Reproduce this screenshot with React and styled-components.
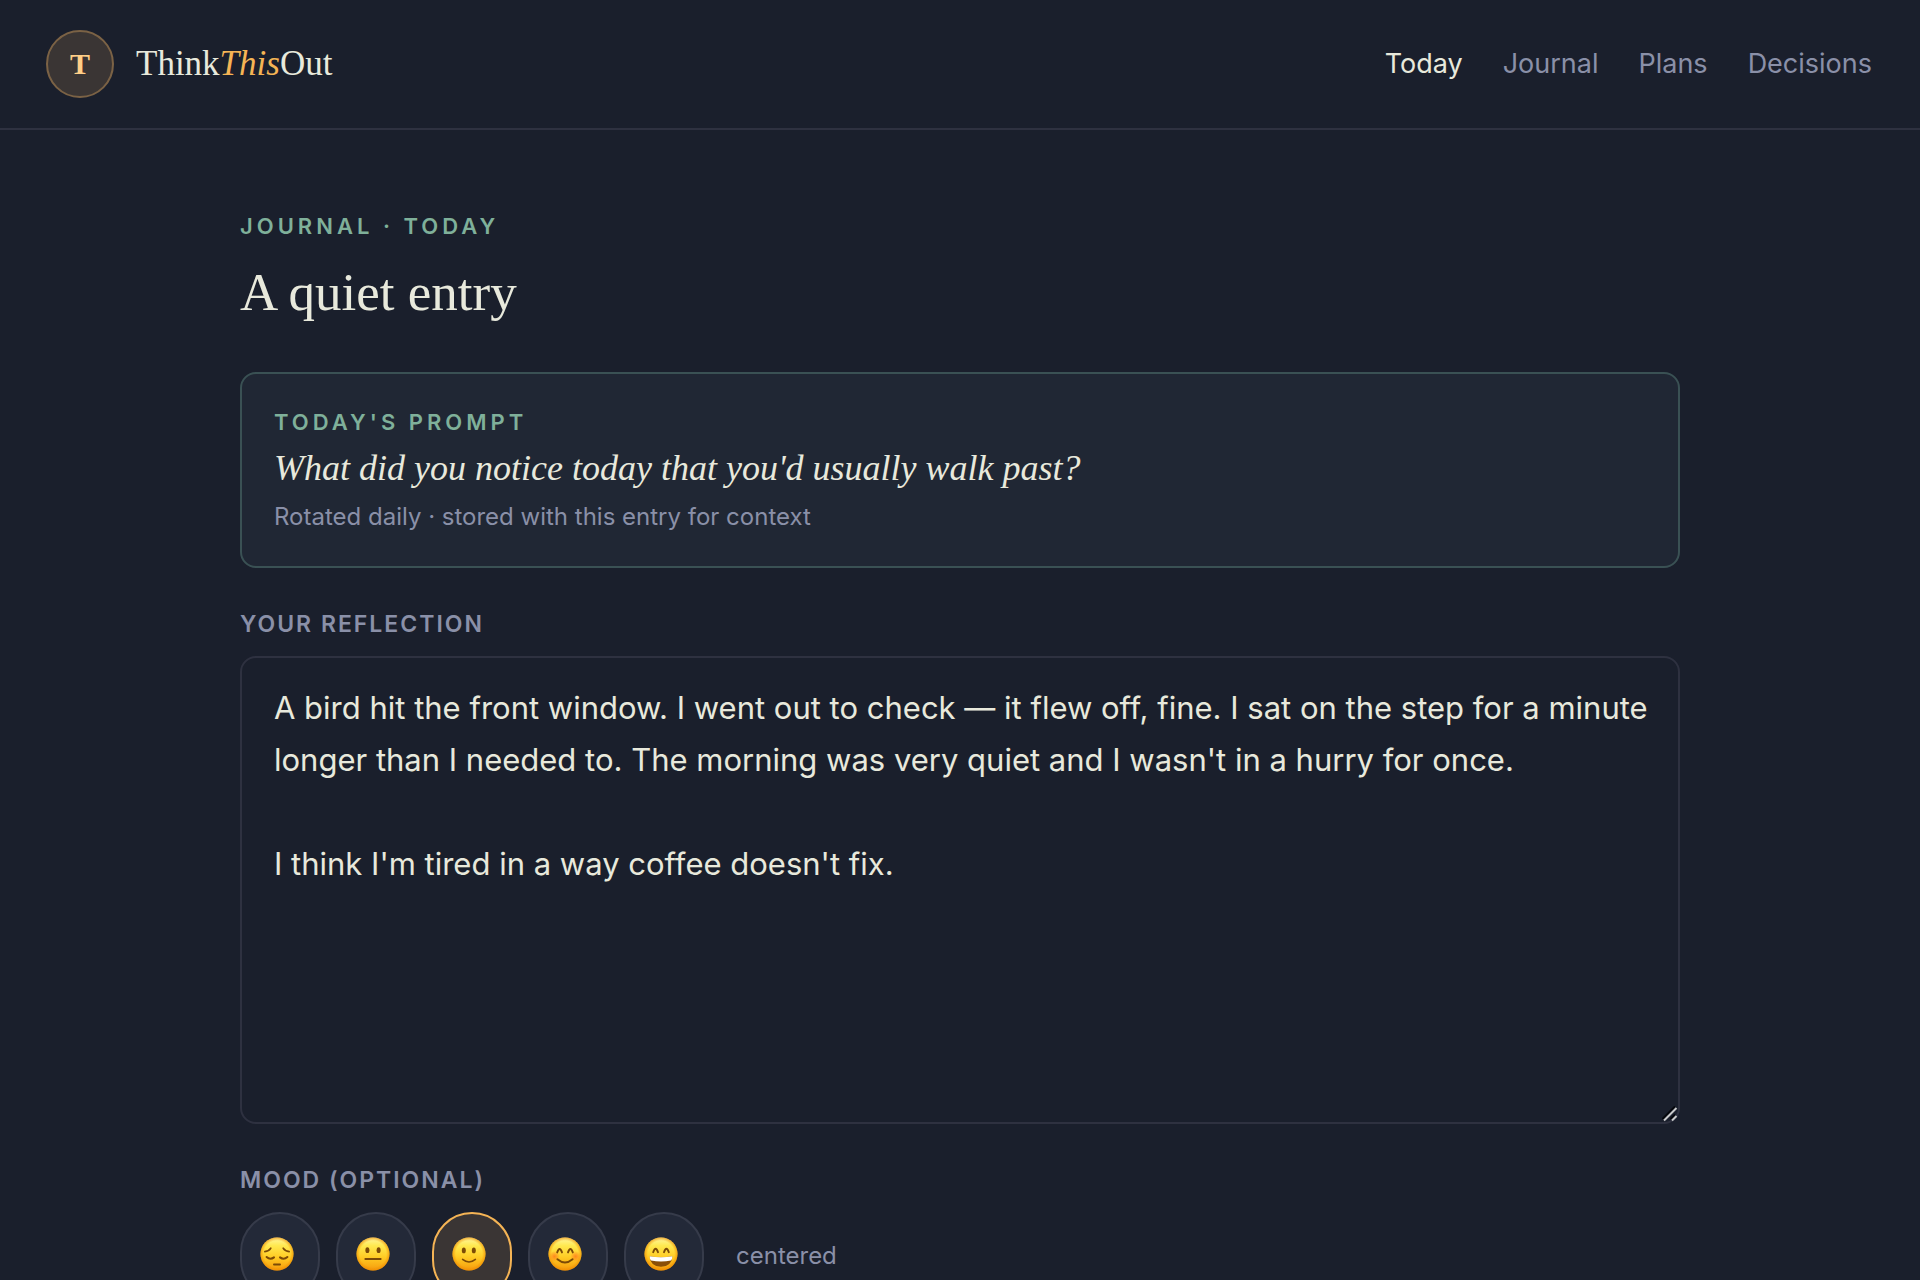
import { useState } from "react";
import styled, { createGlobalStyle } from "styled-components";

const GlobalStyle = createGlobalStyle`
    * {
        box-sizing: border-box;
    }
    html {
        scrollbar-width: none;
    }
    body {
        margin: 0;
        background-color: #1a1f2c;
        color: #e8e9dc;
        font-family: 'Inter', 'Liberation Sans', sans-serif;
    }
`

const links = ["Today", "Journal", "Plans", "Decisions"];

const moods = [
    { id: "low", label: "low", face: Pensive },
    { id: "flat", label: "flat", face: Neutral },
    { id: "centered", label: "centered", face: Slight },
    { id: "warm", label: "warm", face: Blush },
    { id: "bright", label: "bright", face: Grin },
];

const entry = `A bird hit the front window. I went out to check — it flew off, fine. I sat on the step for a minute longer than I needed to. The morning was very quiet and I wasn't in a hurry for once.

I think I'm tired in a way coffee doesn't fix.`;

function Face({ id, children }) {
    return (
        <svg width="34" height="34" viewBox="0 0 34 34" fill="none" strokeLinecap="round" aria-hidden="true">
            <defs>
                <linearGradient id={`${id}-skin`} x1="0" y1="0" x2="0" y2="1">
                    <stop offset="0" stopColor="#fff6a0" />
                    <stop offset="0.25" stopColor="#ffe94f" />
                    <stop offset="0.6" stopColor="#ffcb24" />
                    <stop offset="1" stopColor="#f59a0c" />
                </linearGradient>
                <radialGradient id={`${id}-rim`}>
                    <stop offset="0.8" stopColor="#ee8a00" stopOpacity="0" />
                    <stop offset="1" stopColor="#ee8a00" stopOpacity="0.65" />
                </radialGradient>
                <radialGradient id={`${id}-cheek`}>
                    <stop offset="0" stopColor="#ff6a1c" stopOpacity="0.7" />
                    <stop offset="1" stopColor="#ff6a1c" stopOpacity="0" />
                </radialGradient>
            </defs>
            <circle cx="17" cy="17" r="16.5" fill={`url(#${id}-skin)`} />
            <circle cx="17" cy="17" r="16.5" fill={`url(#${id}-rim)`} />
            {children}
        </svg>
    )
}

function Pensive() {
    return (
        <Face id="pensive">
            <g stroke="#7b4a06" strokeWidth="1.6">
                <path d="M4.8 14.6Q9 14 10.8 11.2" />
                <path d="M29.2 14.6Q25 14 23.2 11.2" />
                <path d="M6.6 20Q10.2 23.4 14 20.4" strokeWidth="2" />
                <path d="M27.4 20Q23.8 23.4 20 20.4" strokeWidth="2" />
                <path d="M14 27.4H20" strokeWidth="2" />
            </g>
        </Face>
    )
}

function Neutral() {
    return (
        <Face id="neutral">
            <ellipse cx="11.4" cy="13.2" rx="2" ry="2.9" fill="#7b4a06" />
            <ellipse cx="22.6" cy="13.2" rx="2" ry="2.9" fill="#7b4a06" />
            <path d="M9.4 22H24.6" stroke="#7b4a06" strokeWidth="2" />
        </Face>
    )
}

function Slight() {
    return (
        <Face id="slight">
            <ellipse cx="11.8" cy="13.4" rx="2" ry="2.9" fill="#7b4a06" />
            <ellipse cx="21.8" cy="13.4" rx="2" ry="2.9" fill="#7b4a06" />
            <path d="M10.6 22.4Q17 27.6 23.4 22.4" stroke="#7b4a06" strokeWidth="1.6" />
        </Face>
    )
}

function Blush() {
    return (
        <Face id="blush">
            <circle cx="6.4" cy="19.4" r="5.4" fill="url(#blush-cheek)" />
            <circle cx="27.6" cy="19.4" r="5.4" fill="url(#blush-cheek)" />
            <g stroke="#7b4a06" strokeWidth="1.9">
                <path d="M9.2 15.4Q11.6 8.6 14 15.4" />
                <path d="M20 15.4Q22.4 8.6 24.8 15.4" />
                <path d="M9.4 22.2Q17 28.6 24.6 22.2" />
            </g>
        </Face>
    )
}

function Grin() {
    return (
        <Face id="grin">
            <g stroke="#7b4a06" strokeWidth="1.9">
                <path d="M9.2 15.2Q11.6 8.4 14 15.2" />
                <path d="M20 15.2Q22.4 8.4 24.8 15.2" />
            </g>
            <path d="M5.6 19.2Q17 21.4 28.4 19.2Q27.6 29.6 17 29.8Q6.4 29.6 5.6 19.2Z" fill="#8a4f08" />
            <path d="M5.6 19.2Q17 21.4 28.4 19.2Q28.3 22 27 23.4Q17 25.4 7 23.4Q5.7 22 5.6 19.2Z" fill="#fff" />
        </Face>
    )
}

function Header() {
    return (
        <TopBar>
            <Brand href="#">
                <Badge>T</Badge>
                <BrandName>Think<em>This</em>Out</BrandName>
            </Brand>
            <Nav>
                {links.map(link => (
                    <NavLink key={link} href="#" $active={link === "Today"}>{link}</NavLink>
                ))}
            </Nav>
        </TopBar>
    )
}

function App() {
    const [text, setText] = useState(entry);
    const [mood, setMood] = useState("centered");

    return (
        <>
            <GlobalStyle />
            <Header />
            <Main>
                <Eyebrow>Journal · Today</Eyebrow>
                <Title>A quiet entry</Title>
                <PromptCard>
                    <Eyebrow>Today's prompt</Eyebrow>
                    <Prompt>What did you notice today that you'd usually walk past?</Prompt>
                    <Note>Rotated daily · stored with this entry for context</Note>
                </PromptCard>
                <Label as="label" htmlFor="reflection">Your reflection</Label>
                <Field>
                    <TextArea
                        id="reflection"
                        rows={8}
                        spellCheck={false}
                        value={text}
                        onChange={e => setText(e.target.value)}
                    />
                    <Grip width="16" height="16" viewBox="0 0 16 16" fill="none" aria-hidden="true">
                        <path d="M0.5 13L13 0.5M8.5 13L13 8.5" stroke="#05070c" strokeWidth="2" />
                        <path d="M2 14.5L14.5 2M10 14.5L14.5 10" stroke="#c9cacb" strokeWidth="2" />
                    </Grip>
                </Field>
                <Label id="mood-label">Mood (optional)</Label>
                <Moods role="group" aria-labelledby="mood-label">
                    {moods.map(({ id, label, face: Icon }) => (
                        <MoodButton
                            key={id}
                            type="button"
                            aria-label={label}
                            aria-pressed={mood === id}
                            $selected={mood === id}
                            onClick={() => setMood(id)}
                        >
                            <Icon />
                        </MoodButton>
                    ))}
                    <MoodName>{moods.find(m => m.id === mood).label}</MoodName>
                </Moods>
            </Main>
        </>
    )
}

const TopBar = styled.header`
    display: flex;
    align-items: center;
    justify-content: space-between;
    padding: 30px 48px 30px 46px;
    border-bottom: 2px solid #2e3140;
`

const Brand = styled.a`
    display: flex;
    align-items: center;
    gap: 22px;
    color: inherit;
    text-decoration: none;
    font-family: 'Liberation Serif', serif;
`

const Badge = styled.span`
    display: flex;
    align-items: center;
    justify-content: center;
    width: 68px;
    height: 68px;
    border: 2px solid #7b6245;
    border-radius: 50%;
    background-color: #3a3534;
    color: #ffcf87;
    font-size: 30px;
    font-weight: 700;
`

const BrandName = styled.span`
    font-size: 35px;
    line-height: 40px;

    em {
        color: #f5b455;
    }
`

const Nav = styled.nav`
    display: flex;
    gap: 40px;
`

const NavLink = styled.a`
    color: ${props => props.$active ? "#e8e9dc" : "#8a90a8"};
    font-size: 27px;
    line-height: 40px;
    text-decoration: none;
`

const Main = styled.main`
    max-width: 1440px;
    margin: 0 auto;
    padding: 80px 0 96px;
`

const Eyebrow = styled.p`
    margin: 0;
    color: #7fb09a;
    font-size: 22px;
    font-weight: 600;
    letter-spacing: 4px;
    line-height: 32px;
    text-transform: uppercase;
`

const Title = styled.h1`
    margin: 18px 0 48px;
    font-family: 'Liberation Serif', serif;
    font-size: 53px;
    font-weight: 400;
    line-height: 64px;
`

const PromptCard = styled.section`
    padding: 32px;
    border: 2px solid #3a5154;
    border-radius: 16px;
    background-color: #202734;
`

const Prompt = styled.p`
    margin: 6px 0 8px;
    font-family: 'Liberation Serif', serif;
    font-size: 36px;
    font-style: italic;
    line-height: 48px;
`

const Note = styled.p`
    margin: 0;
    color: #8a90a8;
    font-size: 24px;
    line-height: 34px;
`

const Label = styled.div`
    display: block;
    margin: 38px 0 14px;
    color: #8a90a8;
    font-size: 23px;
    font-weight: 600;
    letter-spacing: 2px;
    line-height: 36px;
    text-transform: uppercase;
`

const Field = styled.div`
    position: relative;
`

const TextArea = styled.textarea`
    display: block;
    width: 100%;
    padding: 24px 16px 24px 32px;
    border: 2px solid #2e3140;
    border-radius: 16px;
    outline: none;
    background-color: transparent;
    color: inherit;
    font-family: inherit;
    font-size: 31px;
    line-height: 52px;
    overflow: hidden;
    resize: none;
`

const Grip = styled.svg`
    position: absolute;
    right: 2px;
    bottom: 2px;
    pointer-events: none;
`

const Moods = styled.div`
    display: flex;
    align-items: center;
    gap: 16px;
`

const MoodButton = styled.button`
    display: flex;
    align-items: center;
    justify-content: center;
    width: 80px;
    height: 88px;
    padding: 0 6px 4px 0;
    border: 2px solid ${props => props.$selected ? "#f5b455" : "#363b4a"};
    border-radius: 44px;
    background-color: ${props => props.$selected ? "#3a3534" : "#232938"};
    cursor: pointer;
`

const MoodName = styled.span`
    margin-left: 16px;
    color: #8a90a8;
    font-size: 24px;
    line-height: 36px;
`

export default App;
